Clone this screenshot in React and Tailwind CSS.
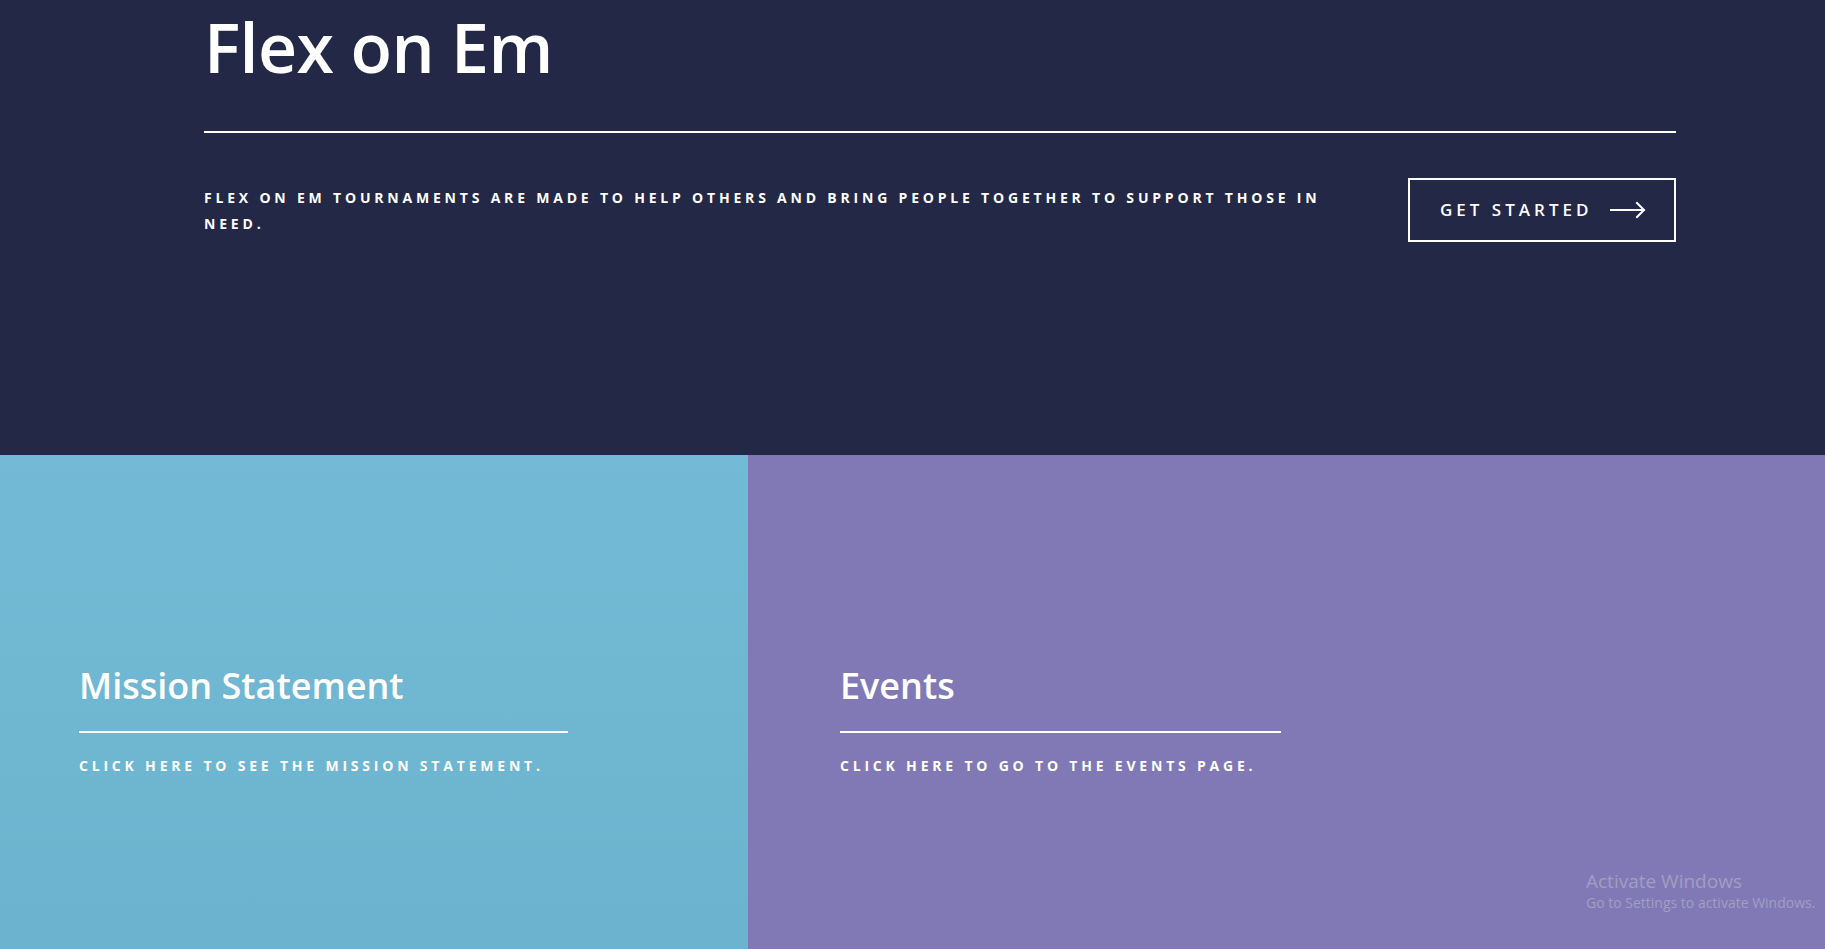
import React from "react";

function ArrowRight() {
  return (
    <svg width="36" height="18" viewBox="0 0 36 18" fill="none" stroke="white" strokeWidth="2" strokeLinecap="square">
      <path d="M1 9 H34" />
      <path d="M27 2 L34 9 L27 16" />
    </svg>
  );
}

export default function App() {
  const font = { fontFamily: '"Open Sans", "Noto Sans", Arial, sans-serif' };
  return (
    <div className="relative min-h-screen w-full overflow-hidden bg-[#232847] text-white" style={font}>
      <section className="h-[455px] bg-[#232847] pl-[204px] pr-[149px]">
        <h1 className="pt-[5px] text-[68px] font-semibold leading-[84px] tracking-[-0.6px]">Flex on Em</h1>
        <div className="mt-[42px] h-[2px] w-full bg-white" />
        <div className="mt-[45px] flex items-start justify-between">
          <p className="mt-[7px] text-[14px] font-bold uppercase leading-[26px] tracking-[3.8px]">
            Flex on Em tournaments are made to help others and bring people together to support those in
            <br />
            need.
          </p>
          <button className="flex h-[64px] w-[268px] shrink-0 items-center border-2 border-white pl-[30px] text-[17px] font-semibold uppercase tracking-[4px] text-white">
            <span>Get Started</span>
            <span className="ml-[18px] flex items-center">
              <ArrowRight />
            </span>
          </button>
        </div>
      </section>
      <section className="flex h-[494px]">
        <div className="flex w-[748px] flex-col bg-gradient-to-b from-[#74bad6] to-[#6bb3ce] pl-[79px] pt-[209px]">
          <h2 className="text-[36px] font-semibold leading-[44px]">Mission Statement</h2>
          <div className="mt-[23px] h-[2px] w-[489px] bg-white" />
          <p className="mt-[23px] text-[14px] font-bold uppercase leading-[20px] tracking-[3.8px]">
            Click here to see the mission statement.
          </p>
        </div>
        <div className="flex flex-1 flex-col bg-[#8179b5] pl-[92px] pt-[209px]">
          <h2 className="text-[36px] font-semibold leading-[44px]">Events</h2>
          <div className="mt-[23px] h-[2px] w-[441px] bg-white" />
          <p className="mt-[23px] text-[14px] font-bold uppercase leading-[20px] tracking-[3.8px]">
            Click here to go to the events page.
          </p>
        </div>
      </section>
      <div className="pointer-events-none absolute left-[1586px] top-[869px] text-[#a29ec4]" style={{ fontFamily: '"Open Sans", "Noto Sans", sans-serif' }}>
        <div className="text-[19px] leading-[24px]">Activate Windows</div>
        <div className="text-[14px] leading-[20px]">Go to Settings to activate Windows.</div>
      </div>
    </div>
  );
}
